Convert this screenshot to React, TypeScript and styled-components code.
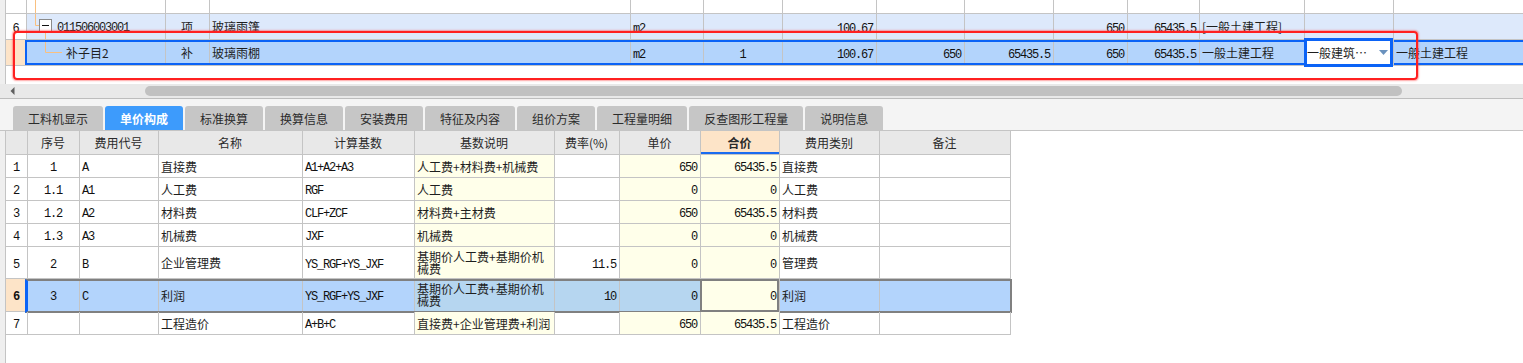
import React from 'react';
import styled, { createGlobalStyle } from 'styled-components';

const MONO = '"Liberation Mono", "DejaVu Sans Mono", monospace';
const CJK = '"Noto Sans CJK SC", "Noto Sans", sans-serif';

const GRID = '#c4c4c4';
const SEL = '#b3d4fc';
const SEL_MIX = '#b6d6f0';
const CREAM = '#ffffea';
const PEACH = '#fde4c8';
const BLUE = '#0b63f6';
const TREE = '#f9c080';

type Align = 'left' | 'center' | 'right';

const GlobalStyle = createGlobalStyle`
  html, body { margin: 0; padding: 0; background: #fff; }
  body { font-family: ${CJK}; font-size: 12px; color: #1e1e1e; }
`;

const Page = styled.div`
  position: relative;
  width: 1523px;
  height: 363px;
  overflow: hidden;
  display: flex;
  flex-direction: column;
`;

const Band = styled.div<{ $h?: number }>`
  display: flex;
  ${(p) => (p.$h ? `height: ${p.$h}px; flex: none;` : 'flex: 1;')}
`;

const Strip = styled.div`
  width: 5px;
  flex: none;
  background: #efefef;
`;

const Sheet = styled.div`
  flex: 1;
  min-width: 0;
  display: flex;
  flex-direction: column;
  border-left: 1px solid ${GRID};
`;

const Row = styled.div<{ $h: number; $bg?: string }>`
  display: flex;
  flex: none;
  height: ${(p) => p.$h}px;
  background: ${(p) => p.$bg ?? 'transparent'};
`;

const SelBody = styled.div<{ $tone: 'blue' | 'gray' }>`
  position: relative;
  display: flex;
  height: 100%;
  background: ${SEL};

  &::after {
    content: '';
    position: absolute;
    pointer-events: none;
    ${(p) =>
      p.$tone === 'blue'
        ? `top: 0; bottom: 1px; left: -2px; right: -4px; border: 2px solid ${BLUE};`
        : `top: 0; bottom: -1px; left: -3px; right: -1px; border: 2px solid #808080; border-left: 3px solid ${BLUE};`}
  }
`;

const Cell = styled.div<{
  $w: number;
  $align?: Align;
  $bg?: string;
  $mono?: boolean;
  $bold?: boolean;
}>`
  position: relative;
  flex: none;
  box-sizing: border-box;
  width: ${(p) => p.$w}px;
  height: 100%;
  border-right: 1px solid ${GRID};
  border-bottom: 1px solid ${GRID};
  display: flex;
  align-items: center;
  justify-content: ${(p) =>
    p.$align === 'center' ? 'center' : p.$align === 'right' ? 'flex-end' : 'flex-start'};
  padding: ${(p) => (p.$mono ? '4px 3px 0 2px' : '0 3px 0 2px')};
  background: ${(p) => p.$bg ?? 'transparent'};
  font-family: ${(p) => (p.$mono ? MONO : CJK)};
  letter-spacing: ${(p) => (p.$mono ? '-1.2px' : '0')};
  color: ${(p) => (p.$mono ? '#111' : '#1e1e1e')};
  font-weight: ${(p) => (p.$bold ? 700 : 400)};
  white-space: nowrap;
  overflow: hidden;
`;

const CodeCell = styled(Cell)`
  padding: 0;
`;

const CodeText = styled.span<{ $mono?: boolean }>`
  font-family: ${(p) => (p.$mono ? MONO : CJK)};
  letter-spacing: ${(p) => (p.$mono ? '-1.2px' : '0')};
  padding-top: ${(p) => (p.$mono ? '3px' : '0')};
`;

const Dropdown = styled(Cell)`
  z-index: 1;
  overflow: visible;
  background: #fff;
  justify-content: space-between;
  padding-right: 5px;

  &::after {
    content: '';
    position: absolute;
    top: -2px;
    bottom: -2px;
    left: -1px;
    right: 0;
    border: 3px solid ${BLUE};
    pointer-events: none;
  }
`;

const FocusCell = styled(Cell)`
  z-index: 1;
  overflow: visible;

  &::after {
    content: '';
    position: absolute;
    top: 0;
    bottom: -1px;
    left: -1px;
    right: 0;
    border: 2px solid #808080;
    pointer-events: none;
  }
`;

const HeadCell = styled(Cell)<{ $active?: boolean }>`
  justify-content: center;
  background: ${(p) => (p.$active ? PEACH : '#e8e8e8')};
  font-weight: ${(p) => (p.$active ? 700 : 400)};
  color: #2a2a2a;
  box-shadow: ${(p) => (p.$active ? 'inset 0 -2px 0 #1a6cf0' : 'none')};
`;

const Wrapped = styled.span`
  white-space: normal;
  line-height: 12px;
  word-break: break-all;
`;

const TreeSvg = styled.svg`
  flex: none;
  display: block;
`;

const Filler = styled.div`
  flex: 1;
`;

const HScroll = styled.div`
  flex: none;
  height: 15px;
  box-sizing: border-box;
  display: flex;
  align-items: center;
  padding-left: 10px;
  background: #e9e9e9;
  border-bottom: 1px solid #bdbdbd;
`;

const Thumb = styled.div`
  margin-left: 130px;
  width: 1257px;
  height: 10px;
  border-radius: 5px;
  background: #c1c1c1;
`;

const TabBar = styled.div`
  flex: none;
  height: 32px;
  box-sizing: border-box;
  display: flex;
  align-items: flex-end;
  gap: 2px;
  padding-left: 13px;
  background: #f4f4f4;
  border-bottom: 1px solid ${GRID};
`;

const Tab = styled.div<{ $active?: boolean }>`
  height: 24px;
  padding: 0 15px;
  display: flex;
  align-items: center;
  border-radius: 3px 3px 0 0;
  background: ${(p) => (p.$active ? '#3d9bfc' : '#c6c6c6')};
  color: ${(p) => (p.$active ? '#fff' : '#2b2b2b')};
  font-weight: ${(p) => (p.$active ? 700 : 400)};
`;

const Callout = styled.div`
  position: absolute;
  left: 13px;
  top: 31px;
  width: 1405px;
  height: 49px;
  box-sizing: border-box;
  border: 2.5px solid #ff2020;
  border-radius: 4px;
  box-shadow: 0 0 1.5px 0.5px rgba(255, 60, 60, 0.45);
  pointer-events: none;
`;

type TreeKind = 'pass' | 'parent' | 'leaf';

const Tree = ({ kind }: { kind: TreeKind }) => {
  if (kind === 'pass')
    return (
      <TreeSvg width={20} height={13}>
        <line x1={8.5} y1={0} x2={8.5} y2={13} stroke={TREE} />
      </TreeSvg>
    );
  if (kind === 'parent')
    return (
      <TreeSvg width={30} height={25}>
        <path d="M8.5 0 V11.5 H12.5" stroke={TREE} fill="none" />
        <path d="M18.5 17.5 V25" stroke={TREE} fill="none" />
        <rect x={12.5} y={5.5} width={12} height={12} fill="#fff" stroke="#8a8a8a" />
        <line x1={15} y1={11.5} x2={22} y2={11.5} stroke="#111" />
      </TreeSvg>
    );
  return (
    <TreeSvg width={39} height={25}>
      <path d="M18.5 0 V12.5 H35" stroke={TREE} fill="none" />
    </TreeSvg>
  );
};

// upper grid
const W_UP = [21, 139, 44, 421, 73, 79, 94, 88, 89, 74, 72, 105, 89, 130];
const A_UP: Align[] = ['center', 'left', 'center', 'left', 'left', 'center', 'right', 'right', 'right', 'right', 'right', 'left', 'left', 'left'];
const M_UP = [true, true, false, false, true, true, true, true, true, true, true, false, false, false];

const parentRow = ['6', '011506003001', '项', '玻璃雨篷', 'm2', '', '100.67', '', '', '650', '65435.5', '[一般土建工程]', '', ''];
const childRow = ['', '补子目2', '补', '玻璃雨棚', 'm2', '1', '100.67', '650', '65435.5', '650', '65435.5', '一般土建工程', '一般建筑…', '一般土建工程'];

const upperCell = (v: string, i: number, tree: TreeKind, monoCode: boolean) => {
  if (i === 1)
    return (
      <CodeCell key={i} $w={W_UP[i]}>
        <Tree kind={tree} />
        <CodeText $mono={monoCode}>{v}</CodeText>
      </CodeCell>
    );
  if (i === 12 && v)
    return (
      <Dropdown key={i} $w={W_UP[i]}>
        <span>{v}</span>
        <svg width={9} height={5}>
          <path d="M0 0 H9 L4.5 5 Z" fill="#6a92be" />
        </svg>
      </Dropdown>
    );
  return (
    <Cell key={i} $w={W_UP[i]} $align={A_UP[i]} $mono={M_UP[i]}>
      {v}
    </Cell>
  );
};

// lower grid
const W_LO = [22, 52, 79, 144, 112, 140, 65, 81, 79, 100, 131];
const A_LO: Align[] = ['center', 'center', 'left', 'left', 'left', 'left', 'right', 'right', 'right', 'left', 'left'];
const M_LO = [true, true, true, false, true, false, true, true, true, false, false];
const HEADS = ['', '序号', '费用代号', '名称', '计算基数', '基数说明', '费率(%)', '单价', '合价', '费用类别', '备注'];
const CREAM_COLS = [5, 7, 8];

type FeeRow = { cells: string[]; h: number; selected?: boolean; wrap?: boolean };

const FEES: FeeRow[] = [
  { cells: ['1', '1', 'A', '直接费', 'A1+A2+A3', '人工费+材料费+机械费', '', '650', '65435.5', '直接费', ''], h: 23 },
  { cells: ['2', '1.1', 'A1', '人工费', 'RGF', '人工费', '', '0', '0', '人工费', ''], h: 23 },
  { cells: ['3', '1.2', 'A2', '材料费', 'CLF+ZCF', '材料费+主材费', '', '650', '65435.5', '材料费', ''], h: 23 },
  { cells: ['4', '1.3', 'A3', '机械费', 'JXF', '机械费', '', '0', '0', '机械费', ''], h: 23 },
  { cells: ['5', '2', 'B', '企业管理费', 'YS_RGF+YS_JXF', '基期价人工费+基期价机械费', '11.5', '0', '0', '管理费', ''], h: 32, wrap: true },
  { cells: ['6', '3', 'C', '利润', 'YS_RGF+YS_JXF', '基期价人工费+基期价机械费', '10', '0', '0', '利润', ''], h: 33, wrap: true, selected: true },
  { cells: ['7', '', '', '工程造价', 'A+B+C', '直接费+企业管理费+利润', '', '650', '65435.5', '工程造价', ''], h: 23 },
];

const feeCell = (row: FeeRow, v: string, i: number) => {
  const content = row.wrap && i === 5 ? <Wrapped>{v}</Wrapped> : v;
  if (row.selected && i === 8)
    return (
      <FocusCell key={i} $w={W_LO[i]} $align="right" $mono $bg={CREAM}>
        {content}
      </FocusCell>
    );
  let bg: string | undefined;
  if (row.selected) bg = i >= 5 && i <= 7 ? SEL_MIX : undefined;
  else bg = CREAM_COLS.includes(i) ? CREAM : undefined;
  return (
    <Cell key={i} $w={W_LO[i]} $align={A_LO[i]} $mono={M_LO[i]} $bg={bg}>
      {content}
    </Cell>
  );
};

const TABS = ['工料机显示', '单价构成', '标准换算', '换算信息', '安装费用', '特征及内容', '组价方案', '工程量明细', '反查图形工程量', '说明信息'];

const App = () => (
  <>
    <GlobalStyle />
    <Page>
      <Band $h={84}>
        <Strip />
        <Sheet>
          <Row $h={14}>
            {W_UP.map((w, i) =>
              i === 1 ? (
                <CodeCell key={i} $w={w}>
                  <Tree kind="pass" />
                </CodeCell>
              ) : (
                <Cell key={i} $w={w} />
              )
            )}
          </Row>
          <Row $h={26} $bg="#dde9fb">
            <Cell $w={W_UP[0]} $align="center" $mono $bg="#fff">
              {parentRow[0]}
            </Cell>
            {parentRow.slice(1).map((v, k) => upperCell(v, k + 1, 'parent', true))}
          </Row>
          <Row $h={26}>
            <Cell $w={W_UP[0]} $bg={PEACH} />
            <SelBody $tone="blue">
              {childRow.slice(1).map((v, k) => upperCell(v, k + 1, 'leaf', false))}
            </SelBody>
          </Row>
          <Filler />
        </Sheet>
      </Band>

      <HScroll>
        <svg width={5} height={8}>
          <path d="M4.5 0 L0.5 4 L4.5 8 Z" fill="#5f5f5f" />
        </svg>
        <Thumb />
      </HScroll>

      <TabBar>
        {TABS.map((t, i) => (
          <Tab key={t} $active={i === 1}>
            {t}
          </Tab>
        ))}
      </TabBar>

      <Band>
        <Strip />
        <Sheet>
          <Row $h={24}>
            {HEADS.map((h, i) => (
              <HeadCell key={i} $w={W_LO[i]} $active={i === 8}>
                {h}
              </HeadCell>
            ))}
          </Row>
          {FEES.map((row) => (
            <Row key={row.cells[0]} $h={row.h}>
              <Cell $w={W_LO[0]} $align="center" $mono $bold={row.selected} $bg={row.selected ? PEACH : undefined}>
                {row.cells[0]}
              </Cell>
              {row.selected ? (
                <SelBody $tone="gray">{row.cells.slice(1).map((v, k) => feeCell(row, v, k + 1))}</SelBody>
              ) : (
                row.cells.slice(1).map((v, k) => feeCell(row, v, k + 1))
              )}
            </Row>
          ))}
          <Filler />
        </Sheet>
      </Band>

      <Callout />
    </Page>
  </>
);

export default App;
